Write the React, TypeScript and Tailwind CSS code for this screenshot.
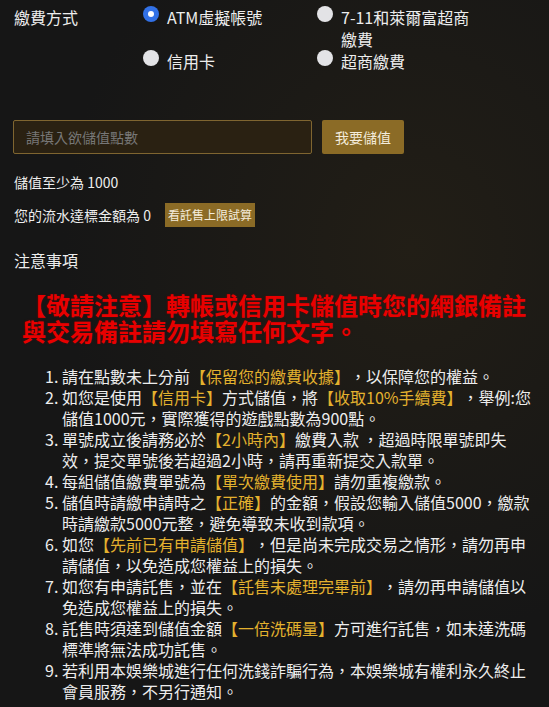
import React from 'react';

type PayOption = { label: string; checked?: boolean };

const OPTIONS: PayOption[] = [
    { label: 'ATM虛擬帳號', checked: true },
    { label: '7-11和萊爾富超商繳費' },
    { label: '信用卡' },
    { label: '超商繳費' },
];

// highlighted fragments are wrapped in 【】 and drawn in gold
const NOTES: (string | { hl: string })[][] = [
    ['請在點數未上分前', { hl: '【保留您的繳費收據】' }, '，以保障您的權益。'],
    ['如您是使用', { hl: '【信用卡】' }, '方式儲值，將', { hl: '【收取10%手續費】' }, '，舉例:您儲值1000元，實際獲得的遊戲點數為900點。'],
    ['單號成立後請務必於', { hl: '【2小時內】' }, '繳費入款 ，超過時限單號即失效，提交單號後若超過2小時，請再重新提交入款單。'],
    ['每組儲值繳費單號為', { hl: '【單次繳費使用】' }, '請勿重複繳款。'],
    ['儲值時請繳申請時之', { hl: '【正確】' }, '的金額，假設您輸入儲值5000，繳款時請繳款5000元整，避免導致未收到款項。'],
    ['如您', { hl: '【先前已有申請儲值】' }, '，但是尚未完成交易之情形，請勿再申請儲值，以免造成您權益上的損失。'],
    ['如您有申請託售，並在', { hl: '【託售未處理完畢前】' }, '，請勿再申請儲值以免造成您權益上的損失。'],
    ['託售時須達到儲值金額', { hl: '【一倍洗碼量】' }, '方可進行託售，如未達洗碼標準將無法成功託售。'],
    ['若利用本娛樂城進行任何洗錢詐騙行為，本娛樂城有權利永久終止會員服務，不另行通知。'],
];

const Radio: React.FC<{ checked?: boolean }> = ({ checked }) =>
    checked ? (
        <span className="flex w-4 h-4 shrink-0 rounded-full bg-[#3271e6] items-center justify-center">
            <span className="block w-[6px] h-[6px] rounded-full bg-white" />
        </span>
    ) : (
        <span className="block w-4 h-4 shrink-0 rounded-full bg-[#e3e3e6]" />
    );

export default function App() {
    return (
        <div className="min-h-screen bg-[#161616] bg-[radial-gradient(ellipse_at_75%_35%,#221e16_0%,#161616_60%)] text-[#ededed] font-['Noto_Sans_CJK_TC',sans-serif] [text-spacing-trim:space-all] pl-[14px] pr-[15px] pt-[6px] pb-2">
            {/* payment method */}
            <div className="flex text-[16px] leading-[22px]">
                <div className="w-[129px] shrink-0">繳費方式</div>
                <div className="grid grid-cols-[174px_160px]">
                    {OPTIONS.map((o) => (
                        <label key={o.label} className="flex items-start gap-2 cursor-pointer">
                            <Radio checked={o.checked} />
                            <span className="w-[140px]">{o.label}</span>
                        </label>
                    ))}
                </div>
            </div>

            {/* amount input */}
            <div className="flex mt-[48px] ml-[-1px]">
                <input
                    className="w-[299px] h-[34px] bg-[#2a2112] border border-[#7f6530] rounded-[2px] px-3 text-[14px] text-[#ddd] placeholder:text-[#777] outline-none"
                    placeholder="請填入欲儲值點數"
                />
                <button className="ml-[10px] w-[82px] h-[34px] bg-[#8b6b26] rounded-[2px] text-[14px] text-[#f4ecdc]">
                    我要儲值
                </button>
            </div>

            <div className="mt-[18px] text-[14px] leading-[20px]">儲值至少為 1000</div>

            <div className="mt-[11px] flex items-center h-[24px] text-[14px]">
                <span>您的流水達標金額為 0</span>
                <button className="ml-[14px] h-[24px] px-[3px] bg-[#8b6b26] text-[12px] text-[#f4ecdc]">看託售上限試算</button>
            </div>

            <div className="mt-[22px] text-[16px] leading-[22px]">注意事項</div>

            <h2 className="mt-[21px] ml-[8px] text-[24px] leading-[26px] font-bold text-[#e80000] [text-shadow:0_0_2px_rgba(120,0,0,0.6)]">
                【敬請注意】轉帳或信用卡儲值時您的網銀備註與交易備註請勿填寫任何文字。
            </h2>

            <ol className="mt-[22px] pl-[48px] list-decimal text-[16px] leading-[21px]">
                {NOTES.map((parts, i) => (
                    <li key={i}>
                        {parts.map((p, j) =>
                            typeof p === 'string' ? (
                                <span key={j}>{p}</span>
                            ) : (
                                <span key={j} className="text-[#e3b12e]">{p.hl}</span>
                            )
                        )}
                    </li>
                ))}
            </ol>
        </div>
    );
}
